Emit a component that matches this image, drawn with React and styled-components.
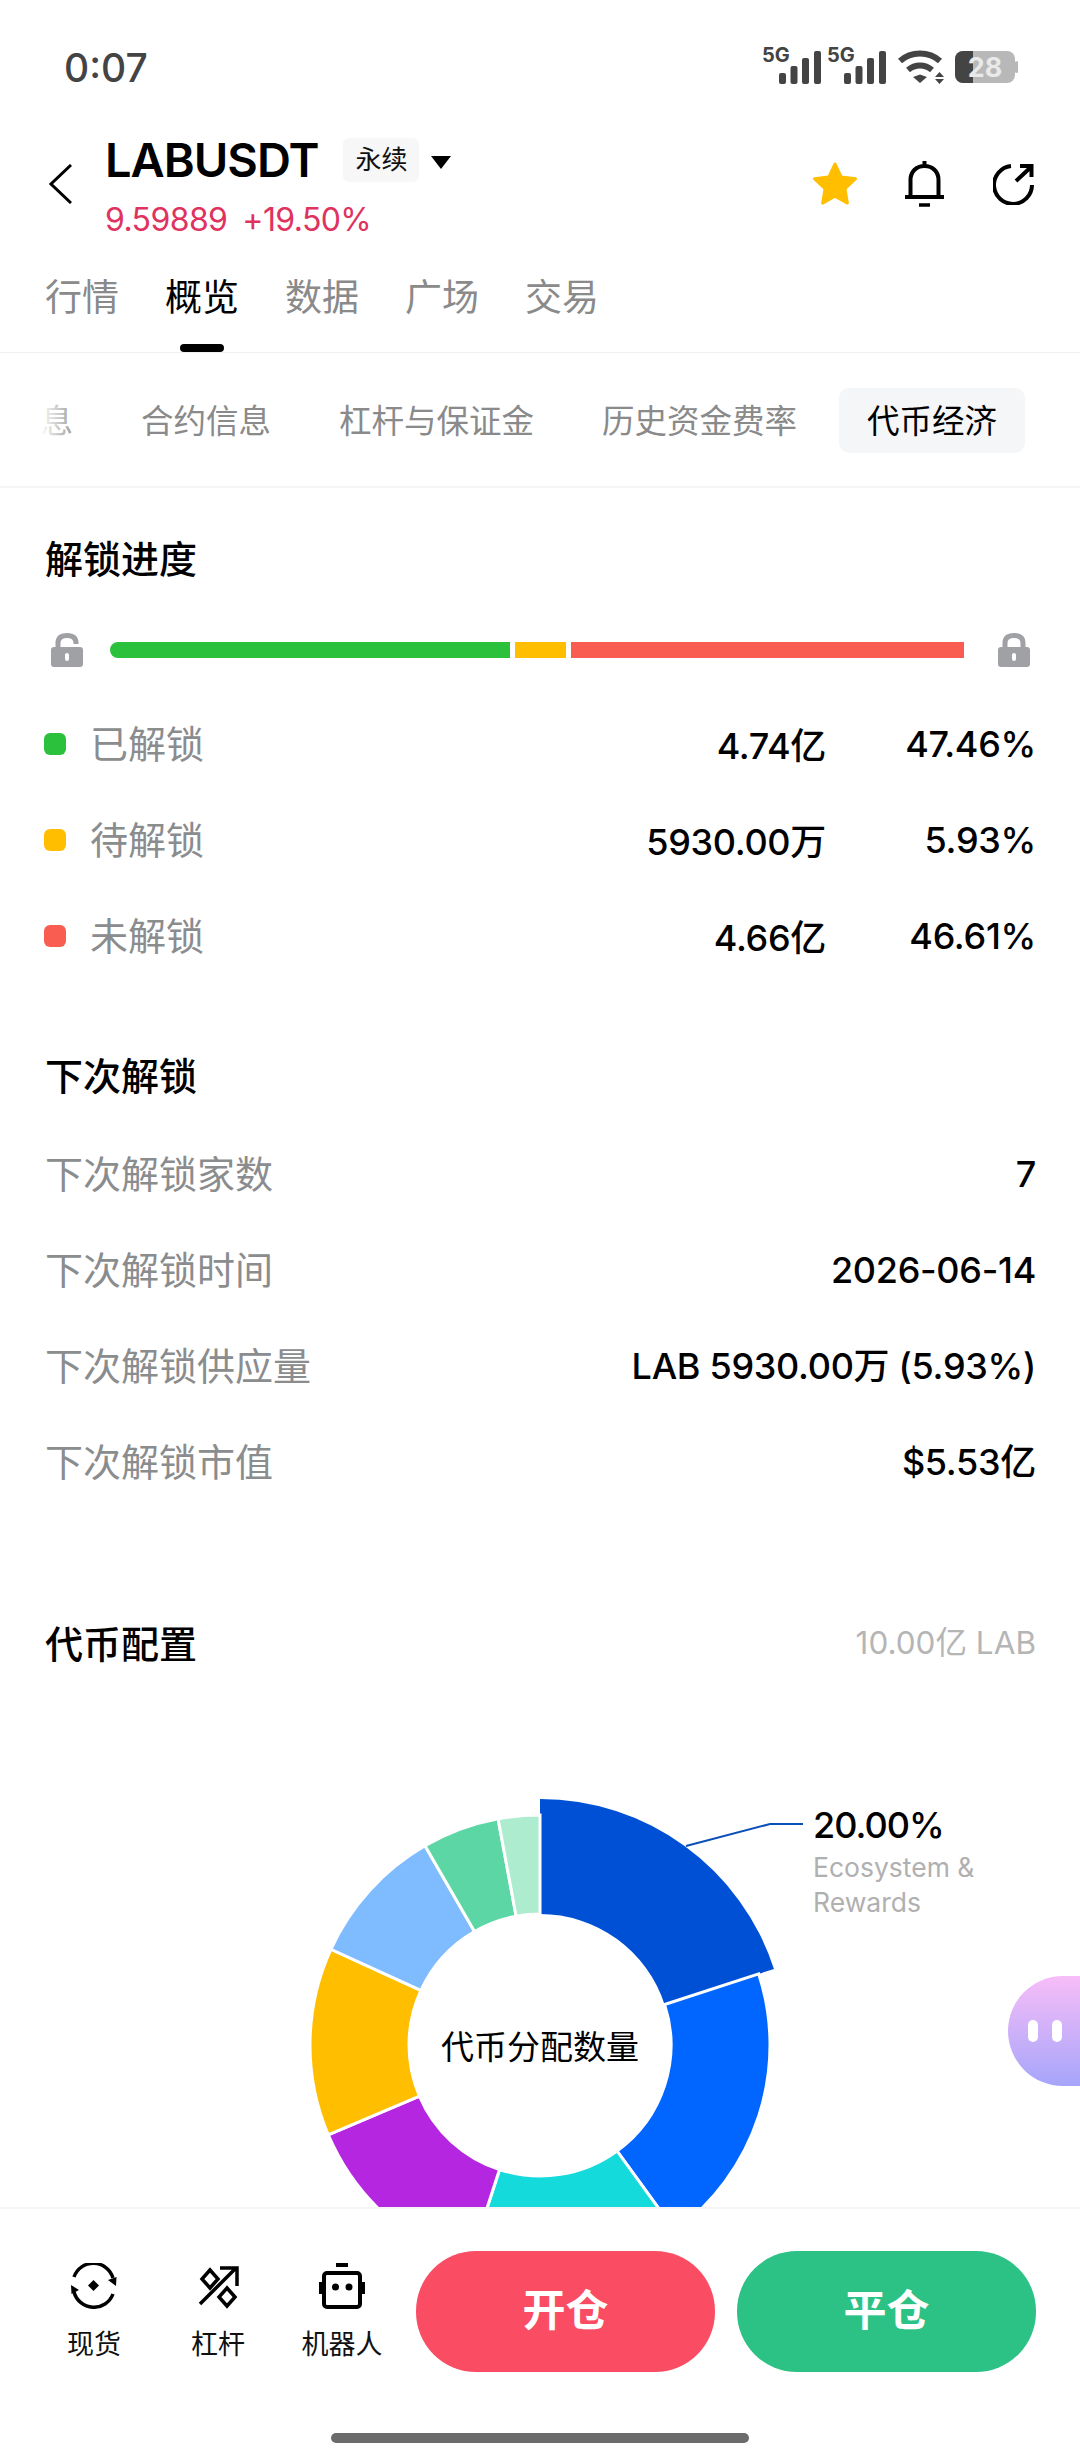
import React from "react";
import styled, { createGlobalStyle } from "styled-components";

const FONT = `Inter, "Noto Sans CJK SC", sans-serif`;

const Global = createGlobalStyle`
	html, body {
		margin: 0;
		padding: 0;
		background: #fff;
		font-family: ${FONT};
	}
	* {
		box-sizing: border-box;
	}
`;

const Page = styled.div`
	width: 1080px;
	height: 2460px;
	display: flex;
	flex-direction: column;
	overflow: hidden;
	background: #fff;
	position: relative;
`;

const StatusBar = styled.div`
	height: 128px;
	flex: none;
	display: flex;
	justify-content: space-between;
	padding: 46px 61px 0 64px;
`;

const Time = styled.div`
	font-size: 39px;
	line-height: 44px;
	font-weight: 500;
	color: #444;
`;

const StatusIcons = styled.div`
	display: flex;
	align-items: flex-start;
`;

const IconGap = styled.div`
	width: ${(p) => p.$w}px;
`;

const Header = styled.div`
	height: 112px;
	flex: none;
	display: flex;
	align-items: center;
	padding: 0 46px 0 48px;
`;

const TitleCol = styled.div`
	margin-left: 33px;
	flex: 1;
`;

const TitleRow = styled.div`
	display: flex;
	align-items: center;
	height: 60px;
`;

const Symbol = styled.div`
	font-size: 47px;
	line-height: 60px;
	font-weight: 600;
	letter-spacing: -1px;
	color: #000;
`;

const Chip = styled.div`
	margin-left: 25px;
	width: 76px;
	height: 44px;
	border-radius: 6px;
	background: #f7f7f7;
	font-size: 26px;
	line-height: 44px;
	text-align: center;
	color: #111;
`;

const Caret = styled.div`
	margin: 4px 0 0 12px;
	width: 0;
	height: 0;
	border-left: 10px solid transparent;
	border-right: 10px solid transparent;
	border-top: 13px solid #000;
`;

const PriceRow = styled.div`
	display: flex;
	gap: 15px;
	margin-top: 12px;
	font-size: 32px;
	line-height: 36px;
	letter-spacing: -0.6px;
	color: #e0325f;
`;

const Actions = styled.div`
	display: flex;
	align-items: center;
`;

const MainTabs = styled.div`
	height: 113px;
	flex: none;
	display: flex;
	gap: 46px;
	padding: 0 45px;
	border-bottom: 1px solid #f2f2f2;
`;

const MainTab = styled.div`
	position: relative;
	height: 112px;
	padding-top: 30px;
	font-size: 37px;
	line-height: 56px;
	color: ${(p) => (p.$active ? "#000" : "#8a8a8a")};

	${(p) =>
		p.$active &&
		`&::after {
			content: "";
			position: absolute;
			left: 15px;
			bottom: 0;
			width: 44px;
			height: 8px;
			border-radius: 4px;
			background: #000;
		}`}
`;

const SubTabs = styled.div`
	height: 135px;
	flex: none;
	display: flex;
	justify-content: flex-end;
	gap: 16px;
	padding: 35px 55px 0 0;
	border-bottom: 2px solid #f6f6f6;
	overflow: hidden;
	position: relative;

	&::before {
		content: "";
		position: absolute;
		left: 0;
		top: 0;
		width: 80px;
		height: 130px;
		background: linear-gradient(to right, #fff 50%, rgba(255, 255, 255, 0));
	}
`;

const SubTab = styled.div`
	flex: none;
	height: 65px;
	padding: 0 ${(p) => (p.$active ? 28 : 26)}px;
	border-radius: 10px;
	font-size: 32.5px;
	line-height: 67px;
	color: ${(p) => (p.$active ? "#000" : "#8a8a8a")};
	background: ${(p) => (p.$active ? "#f5f6f7" : "transparent")};
`;

const Content = styled.div`
	flex: 1;
	min-height: 0;
	overflow: hidden;
	padding: 0 44px 0 45px;
`;

const SectionTitle = styled.div`
	font-size: 38px;
	line-height: 50px;
	font-weight: 500;
	color: #000;
`;

const ProgressTitle = styled(SectionTitle)`
	margin-top: 46px;
`;

const TitleLine = styled.div`
	display: flex;
	align-items: center;
	justify-content: space-between;
`;

const Total = styled.div`
	font-size: 31.5px;
	line-height: 40px;
	color: #b5b5b5;
	margin-top: -2px;
`;

const BarRow = styled.div`
	display: flex;
	align-items: center;
	height: 36px;
	margin-top: 48px;
	padding-left: 6px;
`;

const Bar = styled.div`
	display: flex;
	gap: 5px;
	margin: 0 34px 0 27px;
	width: 854px;
	height: 16px;
	border-radius: 8px 0 0 8px;
	overflow: hidden;
`;

const BarPart = styled.div`
	height: 100%;
	background: ${(p) => p.$color};
	width: ${(p) => p.$width}px;
`;

const Legend = styled.div`
	display: flex;
	flex-direction: column;
	gap: 46px;
	margin-top: 49px;
`;

const LegendRow = styled.div`
	display: grid;
	grid-template-columns: 45px 1fr auto 210px;
	align-items: center;
	height: 50px;
`;

const Dot = styled.div`
	width: 22px;
	height: 22px;
	margin-left: -1px;
	border-radius: 6px;
	background: ${(p) => p.$color};
`;

const Label = styled.div`
	font-size: 38px;
	line-height: 50px;
	color: #8a8c8e;
`;

const Value = styled.div`
	font-size: 36px;
	line-height: 50px;
	font-weight: 500;
	letter-spacing: -0.3px;
	color: #000;
	text-align: right;
`;

const Amount = styled(Value)`
	padding-top: 4px;
`;

const InfoTitle = styled(SectionTitle)`
	margin-top: 92px;
`;

const InfoList = styled.div`
	display: flex;
	flex-direction: column;
	gap: 46px;
	margin-top: 48px;
`;

const InfoRow = styled.div`
	display: flex;
	justify-content: space-between;
	align-items: center;
	height: 50px;
`;

const ChartHead = styled(TitleLine)`
	margin-top: 132px;
`;

const ChartArea = styled.div`
	position: relative;
	margin: 130px -44px 0 -45px;
	height: 520px;
`;

const ChartSvg = styled.svg`
	display: block;
	width: 1080px;
	height: 520px;
`;

const CenterText = styled.div`
	position: absolute;
	left: 0;
	right: 0;
	top: 225px;
	text-align: center;
	font-size: 33px;
	line-height: 46px;
	color: #000;
`;

const Callout = styled.div`
	position: absolute;
	left: 813px;
	top: 4px;
`;

const CalloutValue = styled.div`
	font-size: 36px;
	line-height: 44px;
	font-weight: 500;
	letter-spacing: -1px;
	color: #000;
`;

const CalloutName = styled.div`
	width: 190px;
	margin-top: 3px;
	font-size: 26.5px;
	line-height: 35px;
	color: #b0b0b0;
`;

const Bubble = styled.div`
	position: absolute;
	right: 0;
	top: 1976px;
	width: 72px;
	height: 110px;
	border-radius: 55px 0 0 55px;
	background: linear-gradient(to bottom, #f7bdf8, #a6a5fa);
	display: flex;
	align-items: center;
	gap: 14px;
	padding-left: 20px;
`;

const Eye = styled.div`
	width: 10px;
	height: 22px;
	border-radius: 5px;
	background: #fff;
`;

const BottomBar = styled.div`
	height: 253px;
	flex: none;
	background: #fff;
	border-top: 2px solid #f5f5f5;
	position: relative;
	display: flex;
	align-items: flex-start;
	padding: 42px 44px 0 42px;
`;

const ToolItem = styled.div`
	width: 104px;
	margin-right: ${(p) => p.$mr}px;
	display: flex;
	flex-direction: column;
	align-items: center;
	gap: 16px;
	padding-top: 12px;
	font-size: 27px;
	line-height: 40px;
	color: #111;
	white-space: nowrap;
`;

const TradeBtn = styled.div`
	width: 299px;
	height: 121px;
	border-radius: 60px;
	background: ${(p) => p.$color};
	margin-left: 22px;
	color: #fff;
	font-size: 43px;
	line-height: 118px;
	font-weight: 700;
	text-align: center;
`;

const HomeBar = styled.div`
	position: absolute;
	left: 331px;
	bottom: 17px;
	width: 418px;
	height: 10px;
	border-radius: 5px;
	background: #6b6b6b;
`;

const BellWrap = styled.div`
	display: flex;
	margin: 0 49px 0 47px;
`;

// donut helpers
const CX = 540;
const CY = 246;
const polar = (r, deg) => {
	const a = ((deg - 90) * Math.PI) / 180;
	return [CX + r * Math.cos(a), CY + r * Math.sin(a)];
};
const slicePath = (from, to, r, r0) => {
	const [x1, y1] = polar(r, from);
	const [x2, y2] = polar(r, to);
	const [x3, y3] = polar(r0, to);
	const [x4, y4] = polar(r0, from);
	const big = to - from > 180 ? 1 : 0;
	return `M${x1} ${y1}A${r} ${r} 0 ${big} 1 ${x2} ${y2}L${x3} ${y3}A${r0} ${r0} 0 ${big} 0 ${x4} ${y4}Z`;
};

const slices = [
	{ from: 72, to: 144, color: "#0066ff" },
	{ from: 144, to: 198, color: "#15dadc" },
	{ from: 198, to: 247, color: "#b526e0" },
	{ from: 247, to: 294.6, color: "#ffbe00" },
	{ from: 294.6, to: 330, color: "#7ebbff" },
	{ from: 330, to: 349.5, color: "#5cd6a5" },
	{ from: 349.5, to: 360, color: "#aeeccf" },
];

const Signal = () => (
	<svg width="58" height="40" viewBox="0 0 58 40">
		<text x="-1" y="16" fontFamily="Inter, sans-serif" fontSize="20" fontWeight="700" fill="#444">
			5G
		</text>
		<rect x="16" y="27" width="7" height="11" rx="2" fill="#444" />
		<rect x="27.500" y="20" width="7" height="18" rx="2" fill="#444" />
		<rect x="39" y="12" width="7" height="26" rx="2" fill="#444" />
		<rect x="51" y="5" width="7" height="33" rx="2" fill="#444" />
	</svg>
);

const Wifi = () => (
	<svg width="46" height="40" viewBox="0 0 46 40" fill="none">
		<path d="M2 15C13 5 31 5 42 15" stroke="#444" strokeWidth="6" />
		<path d="M10 24C17 18 27 18 34 24" stroke="#444" strokeWidth="6" />
		<path d="M15 31L22 28.500L29 31L22 37Z" fill="#444" />
		<path d="M37 31L41.500 26L46 31ZM37 33H46L41.500 38Z" fill="#444" />
	</svg>
);

const Battery = () => (
	<svg width="64" height="40" viewBox="0 0 64 40">
		<rect x="0" y="5" width="60" height="32" rx="8" fill="#b8b8b8" />
		<rect x="60" y="15" width="3" height="12" rx="1.500" fill="#b8b8b8" />
		<path d="M8 5H18V37H8A8 8 0 0 1 0 29V13A8 8 0 0 1 8 5Z" fill="#444" />
		<text x="30" y="31" textAnchor="middle" fontFamily="Inter, sans-serif" fontSize="27" fontWeight="700" fill="#e9e9e9">
			28
		</text>
	</svg>
);

const Lock = ({ open }) => (
	<svg width="32" height="34" viewBox="0 0 32 34">
		<path
			d={open ? "M7 15V10C7 4 11 2.500 16 2.500C21 2.500 25 4 25 10V11" : "M7 15V10C7 4 11 2.500 16 2.500C21 2.500 25 4 25 10V15"}
			fill="none"
			stroke="#9fa1a5"
			strokeWidth="5"
		/>
		<rect x="0" y="14" width="32" height="20" rx="3" fill="#9fa1a5" />
		<rect x="14" y="20" width="4" height="8" rx="2" fill="#fff" />
	</svg>
);

const SpotIcon = () => (
	<svg width="46" height="46" viewBox="0 0 46 46" fill="none" stroke="#000" strokeWidth="3.500">
		<path d="M3 14A20.500 20.500 0 0 1 42 15" />
		<path d="M42 31A20.500 20.500 0 0 1 3 29" />
		<path d="M37 17L45 23L45.500 14ZM8 27L0 22L.5 31Z" fill="#000" stroke="none" />
		<path d="M22.500 17L28 22.500L22.500 28L17 22.500Z" fill="#000" stroke="none" />
	</svg>
);

const LeverIcon = () => (
	<svg width="46" height="46" viewBox="0 0 46 46" fill="none" stroke="#000" strokeWidth="3.500">
		<path d="M5 41L41 5M25 5H42V23" />
		<path d="M15 7L23 16L15 25L7 16Z" />
		<path d="M32 25L40 34L32 43L24 34Z" />
	</svg>
);

const RobotIcon = () => (
	<svg width="46" height="46" viewBox="0 0 46 46" fill="none">
		<rect x="5" y="10" width="36" height="34" rx="3" stroke="#000" strokeWidth="4" />
		<rect x="17" y="0" width="12" height="4" fill="#000" />
		<rect x="0" y="19" width="3.500" height="12" fill="#000" />
		<rect x="42.500" y="19" width="3.500" height="12" fill="#000" />
		<circle cx="16.500" cy="24" r="3.500" fill="#000" />
		<circle cx="30" cy="24" r="3.500" fill="#000" />
	</svg>
);

const legend = [
	{ name: "已解锁", color: "#2cc13c", amount: "4.74亿", pct: "47.46%" },
	{ name: "待解锁", color: "#ffbe00", amount: "5930.00万", pct: "5.93%" },
	{ name: "未解锁", color: "#f95c50", amount: "4.66亿", pct: "46.61%" },
];

const info = [
	["下次解锁家数", "7"],
	["下次解锁时间", "2026-06-14"],
	["下次解锁供应量", "LAB 5930.00万 (5.93%)"],
	["下次解锁市值", "$5.53亿"],
];

const App = () => {
	return (
		<Page>
			<Global />
			<StatusBar>
				<Time>0:07</Time>
				<StatusIcons>
					<Signal />
					<IconGap $w={7} />
					<Signal />
					<IconGap $w={12} />
					<Wifi />
					<IconGap $w={11} />
					<Battery />
				</StatusIcons>
			</StatusBar>

			<Header>
				<svg width="24" height="40" viewBox="0 0 24 40" fill="none" stroke="#000" strokeWidth="3">
					<path d="M23 1L3 20L23 39" />
				</svg>
				<TitleCol>
					<TitleRow>
						<Symbol>LABUSDT</Symbol>
						<Chip>永续</Chip>
						<Caret />
					</TitleRow>
					<PriceRow>
						<span>9.59889</span>
						<span>+19.50%</span>
					</PriceRow>
				</TitleCol>
				<Actions>
					<svg width="46" height="44" viewBox="0 0 48 46">
						<path
							d="M24 2L30.500 15.500L45.500 17.500L34.500 28L37 43L24 35.800L11 43L13.500 28L2.500 17.500L17.500 15.500Z"
							fill="#ffbe00"
							stroke="#ffbe00"
							strokeWidth="3"
							strokeLinejoin="round"
						/>
					</svg>
					<BellWrap>
						<svg width="39" height="46" viewBox="0 0 39 46" fill="none" stroke="#000" strokeWidth="4">
							<path d="M0 36H39M5.500 36V19C5.500 11 11 5 19.500 5C28 5 33.500 11 33.500 19V36M19.500 0V5" />
							<path d="M14 44H25" strokeWidth="3.500" />
						</svg>
					</BellWrap>
					<svg width="41" height="41" viewBox="0 0 41 41" fill="none" stroke="#000" strokeWidth="4">
						<path d="M18 2A19 19 0 1 0 39 21" />
						<path d="M23 17L38 3M27 2H38.500V13" />
					</svg>
				</Actions>
			</Header>

			<MainTabs>
				<MainTab>行情</MainTab>
				<MainTab $active>概览</MainTab>
				<MainTab>数据</MainTab>
				<MainTab>广场</MainTab>
				<MainTab>交易</MainTab>
			</MainTabs>

			<SubTabs>
				<SubTab>币种信息</SubTab>
				<SubTab>合约信息</SubTab>
				<SubTab>杠杆与保证金</SubTab>
				<SubTab>历史资金费率</SubTab>
				<SubTab $active>代币经济</SubTab>
			</SubTabs>

			<Content>
				<ProgressTitle>解锁进度</ProgressTitle>
				<BarRow>
					<Lock open />
					<Bar>
						<BarPart $color="#2cc13c" $width={400} />
						<BarPart $color="#ffbe00" $width={51} />
						<BarPart $color="#f95c50" $width={393} />
					</Bar>
					<Lock />
				</BarRow>
				<Legend>
					{legend.map((row) => (
						<LegendRow key={row.name}>
							<Dot $color={row.color} />
							<Label>{row.name}</Label>
							<Amount>{row.amount}</Amount>
							<Value>{row.pct}</Value>
						</LegendRow>
					))}
				</Legend>

				<InfoTitle>下次解锁</InfoTitle>
				<InfoList>
					{info.map(([name, value]) => (
						<InfoRow key={name}>
							<Label>{name}</Label>
							<Value>{value}</Value>
						</InfoRow>
					))}
				</InfoList>

				<ChartHead>
					<SectionTitle>代币配置</SectionTitle>
					<Total>10.00亿 LAB</Total>
				</ChartHead>

				<ChartArea>
					<ChartSvg viewBox="0 0 1080 520">
						<path d={slicePath(0, 72, 246, 131)} fill="#0050d5" />
						{slices.map((s) => (
							<path key={s.from} d={slicePath(s.from, s.to, 230, 131)} fill={s.color} stroke="#fff" strokeWidth="3" />
						))}
						<path d="M686 47L770 25H803" fill="none" stroke="#0b4fb8" strokeWidth="2" />
					</ChartSvg>
					<CenterText>代币分配数量</CenterText>
					<Callout>
						<CalloutValue>20.00%</CalloutValue>
						<CalloutName>Ecosystem &amp; Rewards</CalloutName>
					</Callout>
				</ChartArea>
			</Content>

			<BottomBar>
				<ToolItem $mr={20}>
					<SpotIcon />
					现货
				</ToolItem>
				<ToolItem $mr={20}>
					<LeverIcon />
					杠杆
				</ToolItem>
				<ToolItem $mr={0}>
					<RobotIcon />
					机器人
				</ToolItem>
				<TradeBtn $color="#fa4d64">开仓</TradeBtn>
				<TradeBtn $color="#2dc285">平仓</TradeBtn>
				<HomeBar />
			</BottomBar>

			<Bubble>
				<Eye />
				<Eye />
			</Bubble>
		</Page>
	);
};

export default App;
